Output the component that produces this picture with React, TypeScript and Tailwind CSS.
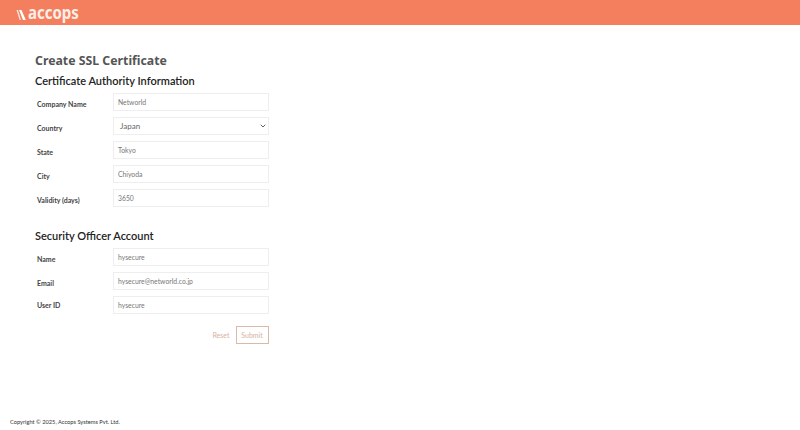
import { ChevronDown } from "lucide-react";

const authorityFields = [
  { label: "Company Name", value: "Networld" },
  { label: "Country", value: "Japan", select: true },
  { label: "State", value: "Tokyo" },
  { label: "City", value: "Chiyoda" },
  { label: "Validity (days)", value: "3650" },
];

const officerFields = [
  { label: "Name", value: "hysecure" },
  { label: "Email", value: "hysecure@networld.co.jp" },
  { label: "User ID", value: "hysecure", raised: true },
];

function Field({
  label,
  value,
  select,
  raised,
}: {
  label: string;
  value: string;
  select?: boolean;
  raised?: boolean;
}) {
  return (
    <div className="flex h-[18px] items-center">
      <label
        className={
          raised
            ? "w-[78px] pl-[2px] text-[7px] font-bold text-[#444]"
            : "w-[78px] pl-[2px] pt-[4px] text-[7px] font-bold text-[#444]"
        }
      >
        {label}
      </label>
      {select ? (
        <div className="flex h-[18px] w-[155.5px] items-center justify-between border border-[#eeeeee] pl-[6px] pr-[1px] text-[8px] text-[#666]">
          <span>{value}</span>
          <ChevronDown size={8} strokeWidth={2.5} className="text-[#444]" />
        </div>
      ) : (
        <div className="flex h-[18px] w-[155.5px] items-center border border-[#eeeeee] pl-[4px] text-[6.8px] text-[#777]">
          {value}
        </div>
      )}
    </div>
  );
}

export default function App() {
  return (
    <div className="flex h-[430px] w-[800px] flex-col bg-white font-['Lato',sans-serif]">
      <header className="flex h-[25px] items-center bg-[#f47f5f] pl-[16px]">
        <svg width="11" height="12" viewBox="0 0 11 12" className="mr-[1px] mt-[4px]">
          <path d="M0.5 1 L2 1 L5 11 L3.6 11 Z" fill="#fbe3da" />
          <path d="M3 1 L5.5 1 L9.8 11 L7 11 Z" fill="#fff" />
        </svg>
        <span className="scale-y-[1.15] font-['Noto_Sans',sans-serif] text-[15px] leading-none font-bold text-[#fdeee8]">
          accops
        </span>
      </header>

      <main className="flex-1 pl-[35px] pt-[27px]">
        <h1 className="font-['Noto_Sans',sans-serif] text-[12.3px] leading-[18px] font-bold text-[#555]">
          Create SSL Certificate
        </h1>
        <h2 className="mt-[3px] text-[11px] leading-[16px] font-semibold text-[#222]">
          Certificate Authority Information
        </h2>
        <div className="mt-[4px] flex flex-col gap-[6px]">
          {authorityFields.map((f) => (
            <Field key={f.label} {...f} />
          ))}
        </div>

        <h2 className="mt-[21px] text-[11px] leading-[16px] font-semibold text-[#222]">
          Security Officer Account
        </h2>
        <div className="mt-[4px] flex flex-col gap-[6px]">
          {officerFields.map((f) => (
            <Field key={f.label} {...f} />
          ))}
        </div>

        <div className="mt-[12px] flex w-[233.5px] items-center justify-end gap-[6px] text-[7px] text-[#d8b0a0]">
          <span>Reset</span>
          <span className="flex h-[18px] w-[33px] items-center justify-center border border-[#d9b9a8]">Submit</span>
        </div>
      </main>

      <footer className="pb-[4px] pl-[10px] text-[5.7px] leading-[9px] text-[#333]">
        Copyright © 2025, Accops Systems Pvt. Ltd.
      </footer>
    </div>
  );
}
